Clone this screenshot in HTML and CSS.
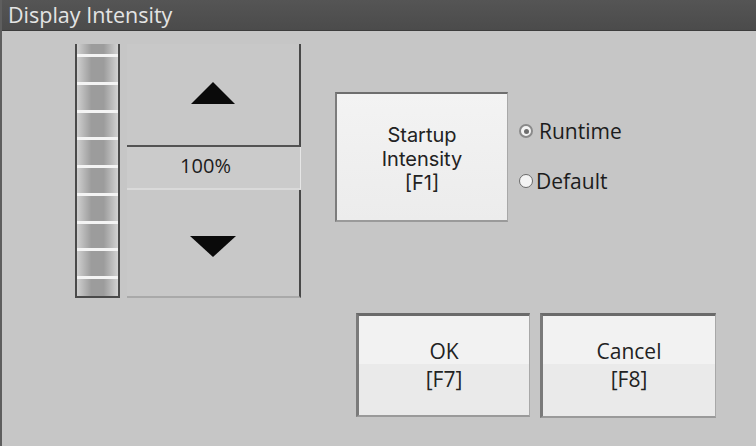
FILE: index.html
```html
<!DOCTYPE html>
<html lang="en">
  <head>
    <meta charset="UTF-8" />
    <meta name="viewport" content="width=device-width, initial-scale=1.0" />
    <title>Display Intensity</title>
    <link rel="stylesheet" href="styles.css">
  </head>
  <body>
    <div class="window">
      <div class="titlebar">Display Intensity</div>
      <div class="content">
        <div class="top">
          <div class="meter">
            <span></span><span></span><span></span><span></span><span></span>
            <span></span><span></span><span></span><span></span>
          </div>
          <div class="stepper">
            <div class="step up">
              <svg width="44" height="22" viewBox="0 0 44 22"><polygon points="22,0 44,22 0,22" fill="#0a0a0a"/></svg>
            </div>
            <div class="value">100%</div>
            <div class="step down">
              <svg width="46" height="21" viewBox="0 0 46 21"><polygon points="0,0 46,0 23,21" fill="#0a0a0a"/></svg>
            </div>
          </div>
          <div class="btn startup">Startup<br>Intensity<br>[F1]</div>
          <div class="radios">
            <div class="radio checked"><i></i>Runtime</div>
            <div class="radio"><i></i>Default</div>
          </div>
        </div>
        <div class="actions">
          <div class="btn ok">OK<br>[F7]</div>
          <div class="btn cancel">Cancel<br>[F8]</div>
        </div>
      </div>
    </div>
  </body>
</html>
```

FILE: styles.css
```css
body {
  margin: 0;
  font-family: "Open Sans", "Noto Sans", sans-serif;
  color: #1c1c1c;
}
.window {
  width: 756px;
  height: 446px;
  background: #c6c6c6;
  box-sizing: border-box;
  border-left: 2px solid #5e5e5e;
  overflow: hidden;
}
.titlebar {
  height: 31px;
  margin-left: -2px;
  padding-left: 8px;
  line-height: 30px;
  font-size: 21.5px;
  color: #e4e4e4;
  background: linear-gradient(to bottom, #555, #4b4b4b);
  border-bottom: 1px solid #3c3c3c;
  box-sizing: border-box;
}
.content {
  padding: 13px 0 0 73px;
}
.top {
  display: flex;
  align-items: flex-start;
}

/* barre d'intensité */
.meter {
  width: 41px;
  height: 242px;
  border-left: 2px solid #4a4a4a;
  border-right: 2px solid #4a4a4a;
  border-bottom: 2px solid #4a4a4a;
  display: flex;
  flex-direction: column;
  padding-top: 10px;
  overflow: hidden;
  box-sizing: content-box;
  background: linear-gradient(to right, #cfcfcf, #9c9c9c 35%, #9c9c9c 65%, #d2d2d2);
}
.meter span {
  flex: none;
  height: 27.75px;
  box-sizing: border-box;
  border-top: 3px solid #f4f4f4;
}

.stepper {
  width: 174px;
  margin-left: 7px;
  display: flex;
  flex-direction: column;
}
.step {
  display: flex;
  justify-content: center;
  align-items: center;
  border-right: 2px solid #484848;
  background: #c8c8c8;
}
.up {
  height: 101px;
  border-bottom: 2px solid #535353;
}
.up svg {
  margin-top: -4px;
}
.value {
  height: 41px;
  line-height: 38px;
  text-align: center;
  font-size: 20px;
  background: #cbcbcb;
  border-right: 1px solid #e6e6e6;
  border-bottom: 2px solid #dadada;
  padding-right: 16px;
}
.down {
  height: 106px;
  border-bottom: 2px solid #a9a9a9;
}
.down svg {
  margin-top: 6px;
}

.btn {
  box-sizing: border-box;
  display: flex;
  align-items: center;
  justify-content: center;
  text-align: center;
  font-size: 20px;
  line-height: 24px;
  color: #222;
  border-top: 2px solid #6e6e6e;
  border-left: 2px solid #7c7c7c;
  border-right: 1px solid #a8a8a8;
  border-bottom: 2px solid #9a9a9a;
}
.startup {
  width: 173px;
  height: 130px;
  margin: 48px 0 0 34px;
  font-family: Inter, "Open Sans", sans-serif;
  background: linear-gradient(to bottom, #f3f3f3, #ececec);
  padding-top: 4px;
}

.radios {
  margin: 76px 0 0 11px;
  display: flex;
  flex-direction: column;
  gap: 28px;
  font-size: 21px;
}
.radio {
  display: flex;
  align-items: center;
  height: 22px;
}
.radio i {
  width: 14px;
  height: 14px;
  border-radius: 50%;
  border: 1px solid #6a6a6a;
  background: #f4f4f4;
  margin-right: 3px;
  box-sizing: border-box;
  display: flex;
  align-items: center;
  justify-content: center;
}
.radio.checked i {
  margin-right: 6px;
  border: 2px solid #8a8a8a;
}
.radio.checked i::after {
  content: '';
  width: 5px;
  height: 5px;
  border-radius: 50%;
  background: #6e6e6e;
}

.actions {
  display: flex;
  justify-content: flex-end;
  gap: 10px;
  margin: 15px 40px 0 0;
}
.ok,
.cancel {
  height: 105px;
  font-size: 21px;
  line-height: 28px;
  border-top: 3px solid #6a6a6a;
  border-left: 3px solid #7a7a7a;
  background: linear-gradient(to bottom, #f2f2f2 48%, #eaeaea 48%);
  padding-bottom: 2px;
}
.ok {
  width: 174px;
  height: 104px;
}
.cancel {
  width: 176px;
}
```
